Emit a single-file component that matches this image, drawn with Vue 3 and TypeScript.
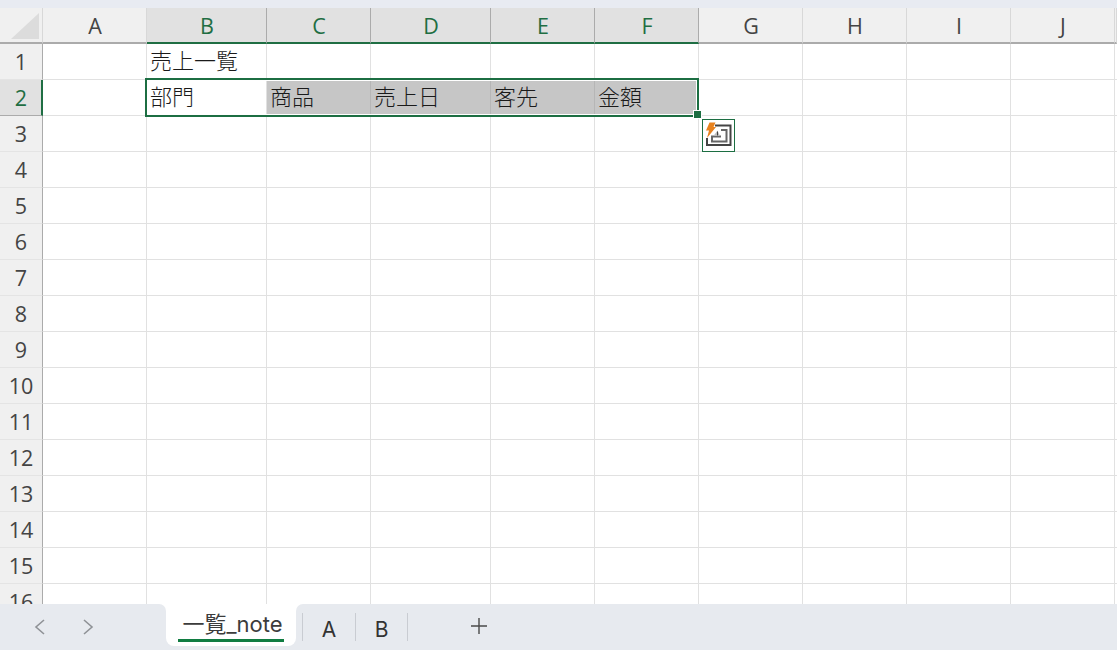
<script setup lang="ts">
const columns = ['A', 'B', 'C', 'D', 'E', 'F', 'G', 'H', 'I', 'J', '']
const selectedColumns = ['B', 'C', 'D', 'E', 'F']
const rowNumbers = Array.from({ length: 16 }, (_, i) => i + 1)
const content: Record<string, string> = {
  '1B': '売上一覧',
  '2B': '部門',
  '2C': '商品',
  '2D': '売上日',
  '2E': '客先',
  '2F': '金額',
}
const isShaded = (row: number, col: string) => row === 2 && ['C', 'D', 'E', 'F'].includes(col)
</script>

<template>
  <div class="page">
    <div class="strip"></div>
    <div class="sheet">
      <div class="grid">
        <div class="corner"><span class="corner-mark"></span></div>
        <div
          v-for="col in columns"
          :key="col || 'rest'"
          class="col-head"
          :class="{ on: selectedColumns.includes(col) }"
        >{{ col }}</div>
        <template v-for="row in rowNumbers" :key="row">
          <div class="row-head" :class="{ on: row === 2 }"><span>{{ row }}</span></div>
          <div
            v-for="col in columns"
            :key="col"
            class="cell"
            :class="{ shaded: isShaded(row, col) }"
          >{{ content[row + col] }}</div>
        </template>
      </div>
      <div class="selection"><span class="handle"></span></div>
      <div class="quick">
        <svg width="31" height="31" viewBox="0 0 31 31" fill="none">
          <path d="M12 5.5H27.5V25H4V18" stroke="#444" stroke-width="2" />
          <path d="M18 10H23.5V21.5H9V16.5H18" stroke="#666" stroke-width="2" />
          <path d="M10.5 16L14.5 10.5L17 16Z" fill="#bdbdbd" />
          <path d="M14.5 11.5V15.5" stroke="#444" stroke-width="1" />
          <path d="M6.5 2.5H12.5L10.5 7H13L4 18L6 10.5H3Z" fill="#e8821e" />
        </svg>
      </div>
    </div>
    <div class="tabs">
      <div class="nav">
        <svg class="chev" width="14" height="18" viewBox="0 0 14 18" fill="none">
          <path d="M11 2L3 9L11 16" stroke="#8f9296" stroke-width="1.6" />
        </svg>
        <svg class="chev" width="14" height="18" viewBox="0 0 14 18" fill="none">
          <path d="M3 2L11 9L3 16" stroke="#8f9296" stroke-width="1.6" />
        </svg>
      </div>
      <div class="tab-active"><span class="tab-label">一覧_note</span></div>
      <div class="rest">
        <span class="sep"></span>
        <span class="tab">A</span>
        <span class="sep"></span>
        <span class="tab b">B</span>
        <span class="sep"></span>
        <svg class="plus" width="18" height="18" viewBox="0 0 18 18" fill="none">
          <path d="M9 1V17M1 9H17" stroke="#4a4a4a" stroke-width="1.4" />
        </svg>
      </div>
    </div>
  </div>
</template>

<style scoped>
.page {
  width: 1117px;
  height: 650px;
  display: flex;
  flex-direction: column;
  overflow: hidden;
  background: #fff;
  font-family: "Open Sans", "Noto Sans CJK JP", sans-serif;
}
.strip {
  height: 8px;
  flex: none;
  background: #e8ebf2;
}
.sheet {
  position: relative;
  flex: 1;
  min-height: 0;
  overflow: hidden;
}
.grid {
  display: grid;
  grid-template-columns: 43px 104px 120px 104px 120px 104px 104px 104px 104px 104px 104px 2px;
  grid-auto-rows: 36px;
}
.corner,
.col-head {
  background: #f0f0f0;
  border-bottom: 2px solid #ababab;
}
.corner {
  border-right: 1px solid #d8d8d8;
  display: flex;
  align-items: flex-end;
  justify-content: flex-end;
  padding: 0 3px 3px 0;
}
.corner-mark {
  width: 28px;
  height: 26px;
  background: #dcdcdc;
  clip-path: polygon(100% 0, 100% 100%, 0 100%);
}
.col-head {
  display: flex;
  align-items: center;
  justify-content: center;
  font-size: 21.5px;
  padding-left: 1px;
  color: #444;
  border-right: 1px solid #d8d8d8;
}
.col-head.on {
  background: #e1e1e1;
  color: #1f6e43;
  border-bottom-color: #1f6e43;
  border-right-color: #ababab;
}
.row-head {
  display: flex;
  align-items: center;
  justify-content: center;
  font-size: 21.5px;
  color: #444;
  background: #f0f0f0;
  border-right: 1px solid #ababab;
  border-bottom: 1px solid #e4e4e4;
}
.row-head.on {
  background: #e1e1e1;
  color: #1f6e43;
  border-right: 2px solid #1f6e43;
  border-bottom-color: #ababab;
  padding-left: 1px;
}
.cell {
  border-right: 1px solid #e1e1e1;
  border-bottom: 1px solid #e1e1e1;
  padding-left: 3px;
  font-family: "Noto Sans CJK JP", sans-serif;
  font-size: 22px;
  font-weight: 300;
  line-height: 30px;
  color: #1a1a1a;
  white-space: nowrap;
  overflow: hidden;
}
.cell.shaded {
  background: #c6c6c6;
  border-right-color: #b6b6b6;
  border-bottom-color: #c6c6c6;
}
.selection {
  position: absolute;
  left: 145px;
  top: 70px;
  width: 554px;
  height: 39px;
  box-sizing: border-box;
  border: 2px solid #1c6e42;
  box-shadow: inset 0 0 0 1px #fff;
}
.handle {
  position: absolute;
  right: -4px;
  bottom: -3px;
  width: 7px;
  height: 7px;
  background: #1c6e42;
  outline: 1px solid #fff;
}
.quick {
  position: absolute;
  left: 702px;
  top: 111px;
  width: 33px;
  height: 33px;
  box-sizing: border-box;
  border: 1px solid #1c6e42;
  background: #fff;
}
.quick svg {
  display: block;
}
.tabs {
  flex: none;
  height: 46px;
  display: flex;
  background: linear-gradient(#fff 12px, #e7eaef 12px);
}
.nav {
  width: 166px;
  flex: none;
  background: #e7eaef;
  border-top-right-radius: 7px;
  display: flex;
  align-items: center;
  gap: 34px;
  padding-left: 33px;
  box-sizing: border-box;
}
.chev {
  flex: none;
}
.tab-active {
  width: 130px;
  height: 42px;
  flex: none;
  background: #fff;
  border-radius: 0 0 8px 8px;
  box-sizing: border-box;
  padding: 0 12px;
}
.tab-label {
  display: block;
  height: 38px;
  line-height: 46px;
  border-bottom: 3px solid #107c41;
  font-family: "Inter", "Noto Sans CJK JP", sans-serif;
  font-size: 22px;
  color: #3c3c3c;
  text-align: center;
  text-indent: 3px;
  white-space: nowrap;
  box-sizing: content-box;
  margin-top: -3px;
  overflow: hidden;
}
.rest {
  flex: 1;
  background: #e7eaef;
  border-top-left-radius: 7px;
  display: flex;
  align-items: center;
  padding-left: 6px;
}
.sep {
  width: 1px;
  height: 28px;
  background: #c9ccd2;
  flex: none;
}
.tab {
  width: 52px;
  flex: none;
  text-align: center;
  font-family: "Inter", sans-serif;
  font-size: 21px;
  color: #333;
  padding-top: 4px;
}
.tab.b {
  width: 51px;
}
.plus {
  margin-left: 62px;
  margin-top: -2px;
}
</style>
